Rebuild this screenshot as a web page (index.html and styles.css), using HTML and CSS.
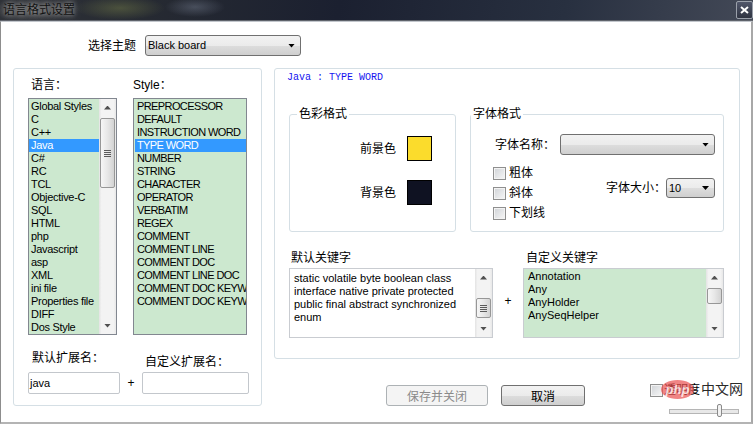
FILE: index.html
```html
<!DOCTYPE html>
<html lang="zh-CN">
<head>
<meta charset="utf-8">
<title>语言格式设置</title>
<link rel="stylesheet" href="styles.css">
</head>
<body>
<div class="window">
  <header class="titlebar">
    <span class="title">语言格式设置</span>
    <span class="close"><svg width="9" height="8" viewBox="0 0 9 8"><path d="M1 1 L8 7 M8 1 L1 7" stroke="#fff" stroke-width="2"/></svg></span>
  </header>
  <div class="client">
    <div class="theme-row">
      <span class="theme-label">选择主题</span>
      <div class="combo theme-combo"><span class="combo-text">Black board</span><i class="combo-arrow"></i></div>
    </div>
    <div class="main">
      <section class="panel left-panel">
        <div class="col-labels"><span class="lbl-lang">语言：</span><span class="lbl-style">Style：</span></div>
        <div class="lists">
          <div class="listbox lang-list">
            <ul class="items">
              <li>Global Styles</li>
              <li>C</li>
              <li>C++</li>
              <li class="selected">Java</li>
              <li>C#</li>
              <li>RC</li>
              <li>TCL</li>
              <li>Objective-C</li>
              <li>SQL</li>
              <li>HTML</li>
              <li>php</li>
              <li>Javascript</li>
              <li>asp</li>
              <li>XML</li>
              <li>ini file</li>
              <li>Properties file</li>
              <li>DIFF</li>
              <li>Dos Style</li>
            </ul>
            <div class="vscroll">
              <span class="sb-arrow up"></span>
              <span class="sb-thumb lang-thumb"><i class="grip"></i></span>
              <span class="sb-fill"></span>
              <span class="sb-arrow down"></span>
            </div>
          </div>
          <div class="listbox style-list">
            <ul class="items">
              <li>PREPROCESSOR</li>
              <li>DEFAULT</li>
              <li>INSTRUCTION WORD</li>
              <li class="selected">TYPE WORD</li>
              <li>NUMBER</li>
              <li>STRING</li>
              <li>CHARACTER</li>
              <li>OPERATOR</li>
              <li>VERBATIM</li>
              <li>REGEX</li>
              <li>COMMENT</li>
              <li>COMMENT LINE</li>
              <li>COMMENT DOC</li>
              <li>COMMENT LINE DOC</li>
              <li>COMMENT DOC KEYWORD</li>
              <li>COMMENT DOC KEYWORD ERROR</li>
            </ul>
          </div>
        </div>
        <div class="ext">
          <span class="default-ext-label">默认扩展名：</span>
          <span class="custom-ext-label">自定义扩展名：</span>
          <div class="textbox default-ext">java</div>
          <span class="plus ext-plus">+</span>
          <div class="textbox custom-ext"></div>
        </div>
      </section>
      <div class="right-col">
        <section class="panel right-panel">
          <div class="current">Java : TYPE WORD</div>
          <div class="groups">
            <fieldset class="group color-group">
              <legend>色彩格式</legend>
              <div class="color-row"><span>前景色</span><span class="swatch fg"></span></div>
              <div class="color-row"><span>背景色</span><span class="swatch bg"></span></div>
            </fieldset>
            <fieldset class="group font-group">
              <legend>字体格式</legend>
              <div class="font-name-row">
                <span class="font-name-label">字体名称：</span>
                <div class="combo font-combo"><span class="combo-text"></span><i class="combo-arrow"></i></div>
              </div>
              <div class="font-style-row">
                <div class="checks">
                  <div class="check-row"><span class="check"></span>粗体</div>
                  <div class="check-row"><span class="check"></span>斜体</div>
                  <div class="check-row"><span class="check"></span>下划线</div>
                </div>
                <div class="size-row">
                  <span>字体大小：</span>
                  <div class="combo size-combo"><span class="combo-text">10</span><i class="combo-arrow"></i></div>
                </div>
              </div>
            </fieldset>
          </div>
          <div class="keywords">
            <span class="kw-label">默认关键字</span>
            <span></span>
            <span class="kw-label kw-custom-label">自定义关键字</span>
            <div class="kw-box default-kw">
              <div class="kw-text">static volatile byte boolean class<br>interface native private protected<br>public final abstract synchronized<br>enum</div>
              <div class="vscroll">
                <span class="sb-arrow up"></span>
                <span class="sb-thumb kw-thumb"><i class="grip"></i></span>
                <span class="sb-fill"></span>
                <span class="sb-arrow down"></span>
              </div>
            </div>
            <span class="plus kw-plus">+</span>
            <div class="kw-box custom-kw">
              <ul class="items">
                <li>Annotation</li>
                <li>Any</li>
                <li>AnyHolder</li>
                <li>AnySeqHelper</li>
              </ul>
              <div class="vscroll">
                <span class="sb-arrow up"></span>
                <span class="sb-thumb custom-thumb"></span>
                <span class="sb-fill"></span>
                <span class="sb-arrow down"></span>
              </div>
            </div>
          </div>
        </section>
        <div class="buttons">
          <button class="btn btn-save" disabled>保存并关闭</button>
          <button class="btn btn-cancel">取消</button>
          <div class="opacity">
            <div class="opacity-check"><span class="check"></span>透明度</div>
            <div class="slider"><span class="slider-thumb"></span></div>
            <div class="watermark"><span class="wm-php">php</span><span class="wm-cn">中文网</span></div>
          </div>
        </div>
      </div>
    </div>
  </div>
</div>
</body>
</html>
```

FILE: styles.css
```css
* { box-sizing: border-box; }
html, body { margin: 0; padding: 0; }
body {
  width: 753px;
  height: 424px;
  overflow: hidden;
  font-family: "Liberation Sans", "Noto Sans CJK SC", sans-serif;
  font-size: 12px;
  color: #000;
  background: #fff;
}
.window {
  width: 753px;
  height: 424px;
  display: flex;
  flex-direction: column;
}
.titlebar {
  height: 21px;
  flex: none;
  display: flex;
  align-items: flex-start;
  justify-content: space-between;
  border-bottom: 1px solid #5f636b;
  background:
    radial-gradient(ellipse 45px 12px at 120px 8px, rgba(110, 118, 70, 0.5), transparent),
    radial-gradient(ellipse 30px 10px at 195px 7px, rgba(140, 150, 170, 0.35), transparent),
    radial-gradient(ellipse 45px 12px at 35px 10px, rgba(110, 110, 110, 0.55), transparent),
    linear-gradient(100deg, #2e3137 0%, #262a32 20%, #1b2030 45%, #283040 75%, #434957 100%);
}
.title {
  margin: 2px 0 0 3px;
  font-size: 12px;
  line-height: 16px;
  color: #121212;
  text-shadow: 0 0 4px #a0a0a0, 0 0 8px #8a8a8a;
}
.close {
  width: 17px;
  height: 18px;
  margin-top: 1px;
  border: 1px solid #9aa0aa;
  border-radius: 2px;
  background: linear-gradient(#50566a, #2f3442);
  display: flex;
  align-items: center;
  justify-content: center;
}
.client {
  flex: 1;
  border-top: 1px solid #c2c6cc;
  border-left: 1px solid #8d8d8d;
  border-right: 2px solid #a8a8a8;
  border-bottom: 2px solid #b4b4b4;
  display: flex;
  flex-direction: column;
}

/* theme row */
.theme-row {
  display: flex;
  align-items: center;
  height: 21px;
  margin: 13px 0 0 87px;
}
.theme-label { width: 57px; line-height: 14px; }
.combo {
  height: 21px;
  border: 1px solid #707070;
  border-radius: 3px;
  background: linear-gradient(#f2f2f2 0%, #ebebeb 50%, #dddddd 51%, #cfcfcf 100%);
  display: flex;
  align-items: center;
  justify-content: space-between;
  padding: 0 5px 0 2px;
}
.theme-combo { width: 156px; }
.combo-text { font-size: 11px; line-height: 13px; }
.combo-arrow {
  width: 7px;
  height: 4px;
  background: #000;
  clip-path: polygon(0 0, 100% 0, 50% 100%);
}

/* main area */
.main {
  display: flex;
  gap: 12px;
  margin: 12px 0 0 12px;
}
.panel {
  border: 1px solid #d5dfe5;
  border-radius: 3px;
}
.left-panel {
  width: 249px;
  height: 338px;
  padding: 9px 0 0 14px;
}
.col-labels, .lists {
  display: grid;
  grid-template-columns: 89px 114px;
  column-gap: 16px;
}
.col-labels { line-height: 14px; }
.lbl-lang { padding-left: 3px; }
.lists { margin-top: 6px; }
.listbox {
  height: 237px;
  border: 1px solid #828790;
  background: #cce8cf;
  display: flex;
  overflow: hidden;
}
.items {
  list-style: none;
  margin: 0;
  padding: 1px 0 0;
  flex: 1;
  min-width: 0;
  font-size: 11px;
  line-height: 13px;
  letter-spacing: -0.3px;
}
.items li {
  height: 13px;
  padding-left: 2px;
  white-space: nowrap;
  overflow: hidden;
}
.items li.selected { background: #3399ff; color: #fff; }
.style-list .items { padding-left: 1px; letter-spacing: -0.6px; }

/* scrollbars */
.vscroll {
  width: 17px;
  flex: none;
  display: flex;
  flex-direction: column;
  background: linear-gradient(90deg, #e3e3e3, #f3f3f3 15%, #f3f3f3 85%, #e8e8e8);
}
.sb-arrow {
  height: 17px;
  flex: none;
  display: flex;
  align-items: center;
  justify-content: center;
}
.sb-arrow::before {
  content: "";
  width: 7px;
  height: 4px;
  background: #505050;
  clip-path: polygon(50% 0, 100% 100%, 0 100%);
}
.sb-arrow.down::before { clip-path: polygon(0 0, 100% 0, 50% 100%); }
.sb-thumb {
  flex: none;
  margin: 0 1px;
  border: 1px solid #979797;
  border-radius: 2px;
  background: linear-gradient(90deg, #f6f6f6, #e7e7e7 50%, #d3d3d3);
  display: flex;
  align-items: center;
  justify-content: center;
}
.grip {
  width: 7px;
  height: 7px;
  background: repeating-linear-gradient(#5a5a5a 0 1px, transparent 1px 2px);
}
.sb-fill { flex: 1; }
.lang-thumb { margin-top: 2px; height: 70px; }
.kw-thumb { margin-top: 12px; height: 20px; }
.custom-thumb { margin-top: 2px; height: 16px; }

/* extension inputs */
.ext {
  display: grid;
  grid-template-columns: 92px 22px 107px;
  grid-template-rows: 18px 22px;
  row-gap: 3px;
  margin-top: 16px;
}
.default-ext-label {
  grid-column: 1;
  grid-row: 1;
  padding-left: 4px;
  line-height: 14px;
  align-self: start;
}
.custom-ext-label {
  grid-column: 3;
  grid-row: 1;
  padding-left: 3px;
  line-height: 14px;
  align-self: end;
}
.default-ext { grid-column: 1; grid-row: 2; }
.ext-plus { grid-column: 2; grid-row: 2; }
.custom-ext { grid-column: 3; grid-row: 2; }
.textbox {
  border: 1px solid #c3c7cc;
  border-radius: 2px;
  font-size: 11px;
  line-height: 20px;
  padding-left: 1px;
}
.plus {
  align-self: center;
  text-align: center;
  font-size: 12px;
  line-height: 14px;
}

/* right column */
.right-col {
  width: 476px;
  display: flex;
  flex-direction: column;
}
.right-panel {
  width: 466px;
  height: 291px;
  padding: 3px 0 0 12px;
}
.current {
  font-family: "Liberation Mono", monospace;
  font-size: 10px;
  line-height: 12px;
  color: #1414f0;
}
.groups {
  display: flex;
  gap: 14px;
  margin: 23px 0 0 2px;
}
.group {
  margin: 0;
  border: 1px solid #d5dfe5;
  border-radius: 3px;
  height: 125px;
  min-inline-size: 0;
}
.group legend {
  padding: 0 2px;
  font-size: 12px;
  line-height: 14px;
}
.color-group {
  width: 167px;
  padding: 15px 23px 0 7px;
}
.color-row {
  display: flex;
  justify-content: flex-end;
  align-items: center;
  gap: 11px;
  height: 25px;
  line-height: 14px;
}
.color-row + .color-row { margin-top: 19px; }
.swatch { width: 25px; height: 25px; border: 1px solid #000; }
.swatch.fg { background: #fbdc2c; }
.swatch.bg { background: #0f1222; }

.font-group {
  width: 254px;
  padding: 13px 8px 0 0;
}
.font-name-row {
  display: flex;
  align-items: center;
  margin-left: 24px;
}
.font-name-label { width: 65px; line-height: 14px; }
.font-combo { width: 155px; }
.font-style-row {
  display: flex;
  justify-content: space-between;
  margin: 12px 0 0 22px;
}
.checks {
  display: flex;
  flex-direction: column;
  gap: 7px;
}
.check-row {
  display: flex;
  align-items: center;
  gap: 3px;
  height: 13px;
  line-height: 13px;
}
.check {
  width: 13px;
  height: 13px;
  flex: none;
  border: 1px solid #8f8f8f;
  background: linear-gradient(135deg, #d0d3d7, #f7f7f7);
  box-shadow: inset 0 0 0 1px #f3f3f3;
}
.size-row {
  display: flex;
  align-items: center;
  align-self: flex-start;
  margin-top: 11px;
  line-height: 14px;
}
.size-combo { width: 49px; height: 20px; }

.keywords {
  display: grid;
  grid-template-columns: 204px 30px 201px;
  grid-template-rows: 14px 70px;
  row-gap: 3px;
  margin: 19px 0 0 2px;
}
.kw-label { line-height: 14px; padding-left: 2px; }
.kw-custom-label { padding-left: 3px; }
.kw-box {
  border: 1px solid #c9ccd1;
  display: flex;
  overflow: hidden;
}
.kw-text {
  flex: 1;
  padding: 3px 0 0 4px;
  font-size: 11px;
  line-height: 13px;
  white-space: nowrap;
  overflow: hidden;
}
.custom-kw { background: #cce8cf; }
.custom-kw .items { padding: 1px 0 0 4px; letter-spacing: 0; }
.custom-kw .items li { padding-left: 0; }
.kw-plus { padding-bottom: 4px; }

/* bottom buttons */
.buttons {
  display: flex;
  align-items: flex-start;
  margin: 26px 0 0 112px;
}
.btn {
  height: 21px;
  padding: 0;
  border-radius: 3px;
  font-family: "Noto Sans CJK SC", sans-serif;
  font-size: 12px;
  line-height: 19px;
}
.btn-save {
  width: 102px;
  border: 1px solid #adb2b5;
  background: #f4f4f4;
  color: #8a8a8a;
}
.btn-cancel {
  width: 84px;
  margin-left: 13px;
  border: 1px solid #707070;
  background: linear-gradient(#f2f2f2 0%, #ebebeb 50%, #dddddd 51%, #cfcfcf 100%);
  color: #000;
}
.opacity {
  position: relative;
  margin: -1px 0 0 65px;
  width: 92px;
}
.opacity-check {
  display: flex;
  align-items: center;
  gap: 1px;
  height: 13px;
  line-height: 13px;
}
.slider {
  position: relative;
  width: 70px;
  height: 13px;
  margin: 7px 0 0 19px;
}
.slider::before {
  content: "";
  position: absolute;
  left: 0;
  right: 0;
  top: 5px;
  height: 3px;
  border: 1px solid #b5b5b5;
  background: #e8e8e8;
}
.slider-thumb {
  position: absolute;
  left: 48px;
  top: 0;
  width: 5px;
  height: 13px;
  border: 1px solid #8a8a8a;
  border-radius: 2px;
  background: #f2f2f2;
}
.watermark {
  position: absolute;
  left: 11px;
  top: -4px;
  width: 95px;
  height: 19px;
  pointer-events: none;
}
.wm-php {
  position: absolute;
  left: 0;
  top: 0;
  width: 33px;
  height: 19px;
  border-radius: 50%;
  background: rgba(234, 80, 80, 0.7);
  color: rgba(255, 255, 255, 0.75);
  font-family: "Liberation Sans", sans-serif;
  font-style: italic;
  font-weight: bold;
  font-size: 13px;
  line-height: 19px;
  text-align: center;
}
.wm-cn {
  position: absolute;
  left: 40px;
  top: 1px;
  font-size: 14px;
  line-height: 17px;
  color: #2a2a2a;
}
```
